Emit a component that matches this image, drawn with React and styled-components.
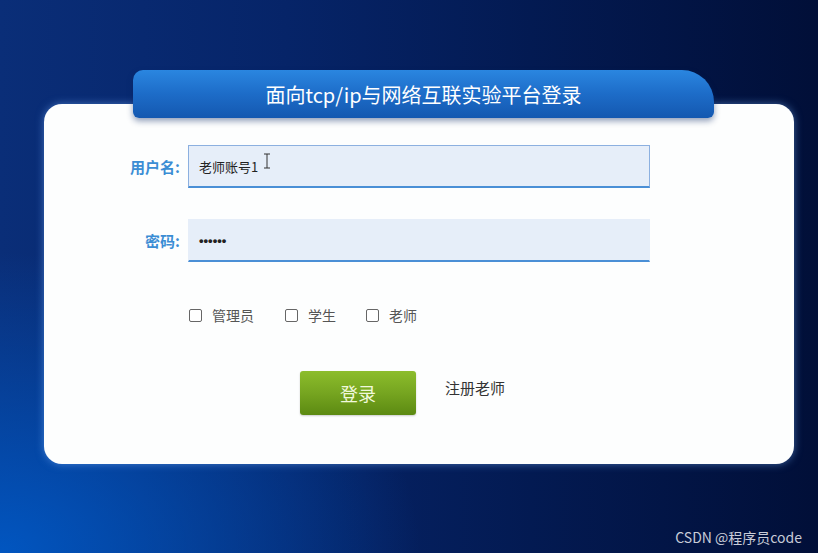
import React from "react";
import styled, { createGlobalStyle } from "styled-components";

const GlobalStyle = createGlobalStyle`
	html, body {
		margin: 0;
		padding: 0;
	}
	body {
		font-family: "Noto Sans CJK SC", "Noto Sans", sans-serif;
	}
	* {
		box-sizing: border-box;
	}
`

const Page = styled.div`
	position: relative;
	width: 818px;
	height: 553px;
	overflow: hidden;
	padding: 70px 0 0 44px;
	background:
		radial-gradient(ellipse 420px 300px at 0% 100%, rgba(0, 90, 200, 0.9), rgba(0, 60, 160, 0) 100%),
		linear-gradient(90deg, #0a2e78 0%, #062468 35%, #031a52 65%, #010f38 100%);
`

const Wrap = styled.div`
	width: 750px;
	display: flex;
	flex-direction: column;
`

const Tab = styled.div`
	position: relative;
	z-index: 2;
	margin-left: 89px;
	width: 581px;
	height: 48px;
	border-radius: 10px 32px 6px 6px;
	background: linear-gradient(180deg, #2a86e0 0%, #1d6cc8 50%, #1458b0 100%);
	box-shadow: 0 3px 6px rgba(10, 40, 100, 0.45);
	display: flex;
	align-items: center;
	justify-content: center;
	color: #ffffff;
	font-size: 20px;
`

const Card = styled.div`
	margin-top: -14px;
	height: 360px;
	background: #fdfefe;
	border-radius: 18px;
	box-shadow: 0 0 8px rgba(120, 180, 255, 0.5);
	padding-top: 41px;
	display: flex;
	flex-direction: column;
`

const Row = styled.div`
	display: flex;
	align-items: center;
	gap: 8px;
	margin-bottom: ${(p) => p.gap || 0}px;
`

const Label = styled.label`
	width: 136px;
	text-align: right;
	font-size: 15px;
	font-weight: bold;
	color: #3b8dd4;
`

const Input = styled.div`
	position: relative;
	width: 462px;
	height: 43px;
	background: #e6eef9;
	border: 1px solid ${(p) => (p.focused ? "#8cb0e0" : "#e6eef9")};
	border-bottom: 2px solid #4a8fd6;
	padding-left: 10px;
	display: flex;
	align-items: center;
	font-size: 13px;
	color: #222;
`

const Dots = styled.span`
	font-family: "Liberation Sans", Arial, sans-serif;
	font-size: 13px;
	font-weight: bold;
	color: #222;
`

const Cursor = styled.svg`
	position: absolute;
	left: 74px;
	top: 7px;
`

const Checks = styled.div`
	display: flex;
	align-items: center;
	margin: 43px 0 0 145px;
	font-size: 14px;
	color: #555;
`

const Check = styled.label`
	display: flex;
	align-items: center;
	margin-right: ${(p) => p.gap}px;
`

const Box = styled.span`
	width: 13px;
	height: 13px;
	border: 1px solid #666;
	border-radius: 2px;
	margin-right: 10px;
	background: #fff;
`

const Actions = styled.div`
	display: flex;
	align-items: center;
	margin: 46px 0 0 256px;
`

const LoginButton = styled.button`
	width: 116px;
	height: 44px;
	border: none;
	border-radius: 3px;
	background: linear-gradient(180deg, #8cbd2c 0%, #76a520 50%, #5c8a12 100%);
	color: #f0f8dc;
	font-family: inherit;
	font-size: 18px;
	box-shadow: 0 1px 2px rgba(0, 0, 0, 0.2);
	padding: 0;
`

const Register = styled.span`
	margin: -12px 0 0 29px;
	font-size: 15px;
	color: #333;
`

const Mark = styled.div`
	position: absolute;
	right: 16px;
	bottom: 6px;
	font-size: 14px;
	color: #c8ccd8;
`

export default function App() {
	return (
		<Page>
			<GlobalStyle />
			<Wrap>
				<Tab>面向tcp/ip与网络互联实验平台登录</Tab>
				<Card>
					<Row gap={31}>
						<Label>用户名:</Label>
						<Input focused>
							老师账号1
							<Cursor width="8" height="16" viewBox="0 0 8 16">
								<path d="M1 1h6M4 1v14M1 15h6" stroke="#333" strokeWidth="1" fill="none" />
							</Cursor>
						</Input>
					</Row>
					<Row>
						<Label>密码:</Label>
						<Input>
							<Dots>••••••</Dots>
						</Input>
					</Row>
					<Checks>
						<Check gap={31}><Box />管理员</Check>
						<Check gap={30}><Box />学生</Check>
						<Check gap={0}><Box />老师</Check>
					</Checks>
					<Actions>
						<LoginButton>登录</LoginButton>
						<Register>注册老师</Register>
					</Actions>
				</Card>
			</Wrap>
			<Mark>CSDN @程序员code</Mark>
		</Page>
	);
}
